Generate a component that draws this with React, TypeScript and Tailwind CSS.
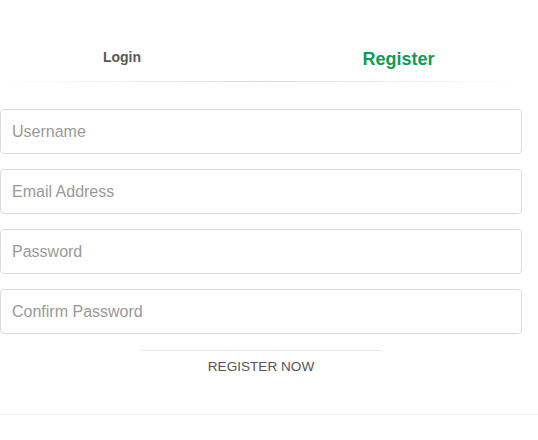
import React from 'react';

const fields = ['Username', 'Email Address', 'Password', 'Confirm Password'];

const App: React.FC = () => {
  return (
    <div className="w-[538px] h-[440px] bg-white font-['Liberation_Sans',Arial,sans-serif]">
      <div className="w-[522px]">
        {/* Tabs */}
        <div className="grid grid-cols-2 items-start pt-[45px]">
          <div className="pr-[17px] text-center">
            <span className="mt-[2px] inline-block text-sm font-bold leading-5 text-[#595959]">Login</span>
          </div>
          <div className="pl-[14px] text-center text-lg font-bold leading-7 text-[#0c9d58]">Register</div>
        </div>
        <div className="mt-[8px] h-px bg-gradient-to-r from-transparent via-[#dcdcdc] to-transparent" />

        {/* Form */}
        <form className="mt-[27px] flex flex-col gap-[15px]">
          {fields.map((f) => (
            <input
              key={f}
              type={f.includes('Password') ? 'password' : 'text'}
              placeholder={f}
              className="h-[45px] w-full rounded-[4px] border border-[#dcdcdc] px-[11px] text-base text-[#555] outline-none placeholder:text-[#999]"
            />
          ))}
        </form>

        <button
          type="button"
          className="mx-auto mt-[16px] flex h-[40px] w-[244px] items-start justify-center rounded-[4px] border-t border-[#eaeaea] pt-[6px] text-[13.6px] leading-5 text-[#555]"
        >
          REGISTER NOW
        </button>
      </div>
      <div className="mt-[24px] h-px w-full bg-[#eeeeee]" />
    </div>
  );
};

export default App;
